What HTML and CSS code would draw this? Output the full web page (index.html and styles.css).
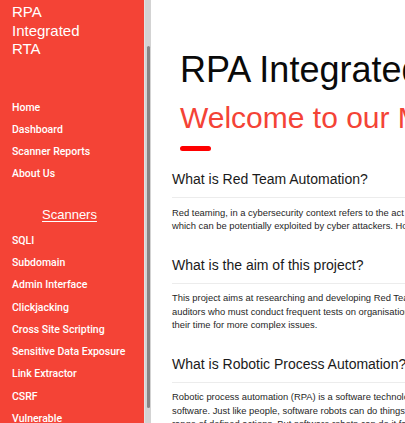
FILE: index.html
```html
<!DOCTYPE html>
<html lang="en">
<head>
<meta charset="utf-8">
<title>RPA Integrated RTA</title>
<link rel="stylesheet" href="styles.css">
</head>
<body>
<div class="layout">
  <aside class="sidebar">
    <div class="sidebar-pane">
      <div class="brand">RPA<br>Integrated<br>RTA</div>
      <nav class="nav nav-main">
        <a href="#">Home</a>
        <a href="#">Dashboard</a>
        <a href="#">Scanner Reports</a>
        <a href="#">About Us</a>
      </nav>
      <h3 class="nav-title">Scanners</h3>
      <nav class="nav nav-scanners">
        <a href="#">SQLI</a>
        <a href="#">Subdomain</a>
        <a href="#">Admin Interface</a>
        <a href="#">Clickjacking</a>
        <a href="#">Cross Site Scripting</a>
        <a href="#">Sensitive Data Exposure</a>
        <a href="#">Link Extractor</a>
        <a href="#">CSRF</a>
        <a href="#">Vulnerable</a>
      </nav>
    </div>
    <div class="scroll-track" aria-hidden="true"><div class="scroll-thumb"></div></div>
  </aside>
  <main class="main">
    <header class="hero">
      <h1 class="hero-title">RPA Integrated RTA</h1>
      <h2 class="hero-sub">Welcome to our Main Page</h2>
      <div class="hero-bar"></div>
    </header>
    <section class="topic">
      <h2 class="topic-title">What is Red Team Automation?</h2>
      <hr class="topic-rule">
      <p class="topic-text">Red teaming, in a cybersecurity context refers to the act of emulating real-world attacks to find weaknesses in a system<br>which can be potentially exploited by cyber attackers. However, doing this manually takes a great deal of time.</p>
    </section>
    <section class="topic">
      <h2 class="topic-title">What is the aim of this project?</h2>
      <hr class="topic-rule">
      <p class="topic-text">This project aims at researching and developing Red Team Automation tools to help penetration testers and<br>auditors who must conduct frequent tests on organisations, so that they can save<br>their time for more complex issues.</p>
    </section>
    <section class="topic">
      <h2 class="topic-title">What is Robotic Process Automation?</h2>
      <hr class="topic-rule">
      <p class="topic-text">Robotic process automation (RPA) is a software technology that makes it easy to build and deploy robots that emulate humans using<br>software. Just like people, software robots can do things like understand what is on a screen and complete a<br>range of defined actions. But software robots can do it faster and more consistently than people.</p>
    </section>
  </main>
</div>
<script src="script.js"></script>
</body>
</html>
```

FILE: styles.css
```css
* { box-sizing: border-box; }

html, body {
  margin: 0;
  padding: 0;
  height: 100%;
  overflow: hidden;
  background: #ffffff;
  font-family: "Liberation Sans", Arial, sans-serif;
}

.layout {
  display: flex;
  height: 100vh;
}

.sidebar {
  flex: 0 0 151px;
  display: flex;
  height: 100vh;
  background: #f44336;
  color: #ffffff;
}

.sidebar-pane {
  flex: 1 1 auto;
  min-width: 0;
  height: 100%;
  overflow: hidden;
  padding: 57px 0 13px 0;
}

.scroll-track {
  flex: 0 0 7px;
  height: 100%;
  background: #d3d3d3;
  border-left: 1px solid #e2e2e2;
  padding: 46px 1.5px 0 1.5px;
}

.scroll-thumb {
  height: 362px;
  border-radius: 2px;
  background: #858585;
}

.brand {
  font-size: 15px;
  line-height: 18.5px;
  padding-left: 12px;
  margin-bottom: 38px;
}

.nav {
  display: flex;
  flex-direction: column;
}

.nav a {
  display: block;
  color: #ffffff;
  text-decoration: none;
  font-family: Roboto, "Liberation Sans", sans-serif;
  font-weight: 500;
  font-size: 10.5px;
  line-height: 22.3px;
  padding-left: 12px;
  white-space: nowrap;
}

.nav-title {
  margin: 19px 0 5px 0;
  font-size: 13px;
  font-weight: 400;
  line-height: 20px;
  text-align: center;
  padding-right: 5px;
  text-decoration: underline;
  text-underline-offset: 2px;
  text-decoration-thickness: 1px;
}

.main {
  flex: 1 1 auto;
  min-width: 0;
  overflow: hidden;
  white-space: nowrap;
}

.hero {
  padding: 49px 0 0 29px;
}

.hero-title {
  margin: 0;
  font-size: 36px;
  line-height: 42px;
  font-weight: 400;
  color: #0a0a0a;
}

.hero-sub {
  margin: 8.5px 0 0 0;
  font-size: 30px;
  line-height: 36px;
  font-weight: 400;
  color: #f44336;
}

.hero-bar {
  width: 31px;
  height: 5px;
  margin-top: 10.5px;
  border-radius: 3px;
  background: #ff0000;
}

.topic {
  padding-left: 21px;
}

.hero + .topic {
  margin-top: 18px;
}

.topic + .topic {
  margin-top: 22px;
}

.topic-title {
  margin: 0;
  font-size: 14px;
  line-height: 20px;
  font-weight: 400;
  color: #1a1a1a;
}

.topic-rule {
  margin: 8px 0 0 0;
  border: 0;
  height: 1px;
  background: #ececec;
}

.topic-text {
  margin: 7.5px 0 0 0;
  font-size: 9.4px;
  line-height: 13.5px;
  color: #1f1f1f;
}
```

FILE: script.js
```js
document.querySelector('.sidebar-pane').scrollTop = 54;
```
